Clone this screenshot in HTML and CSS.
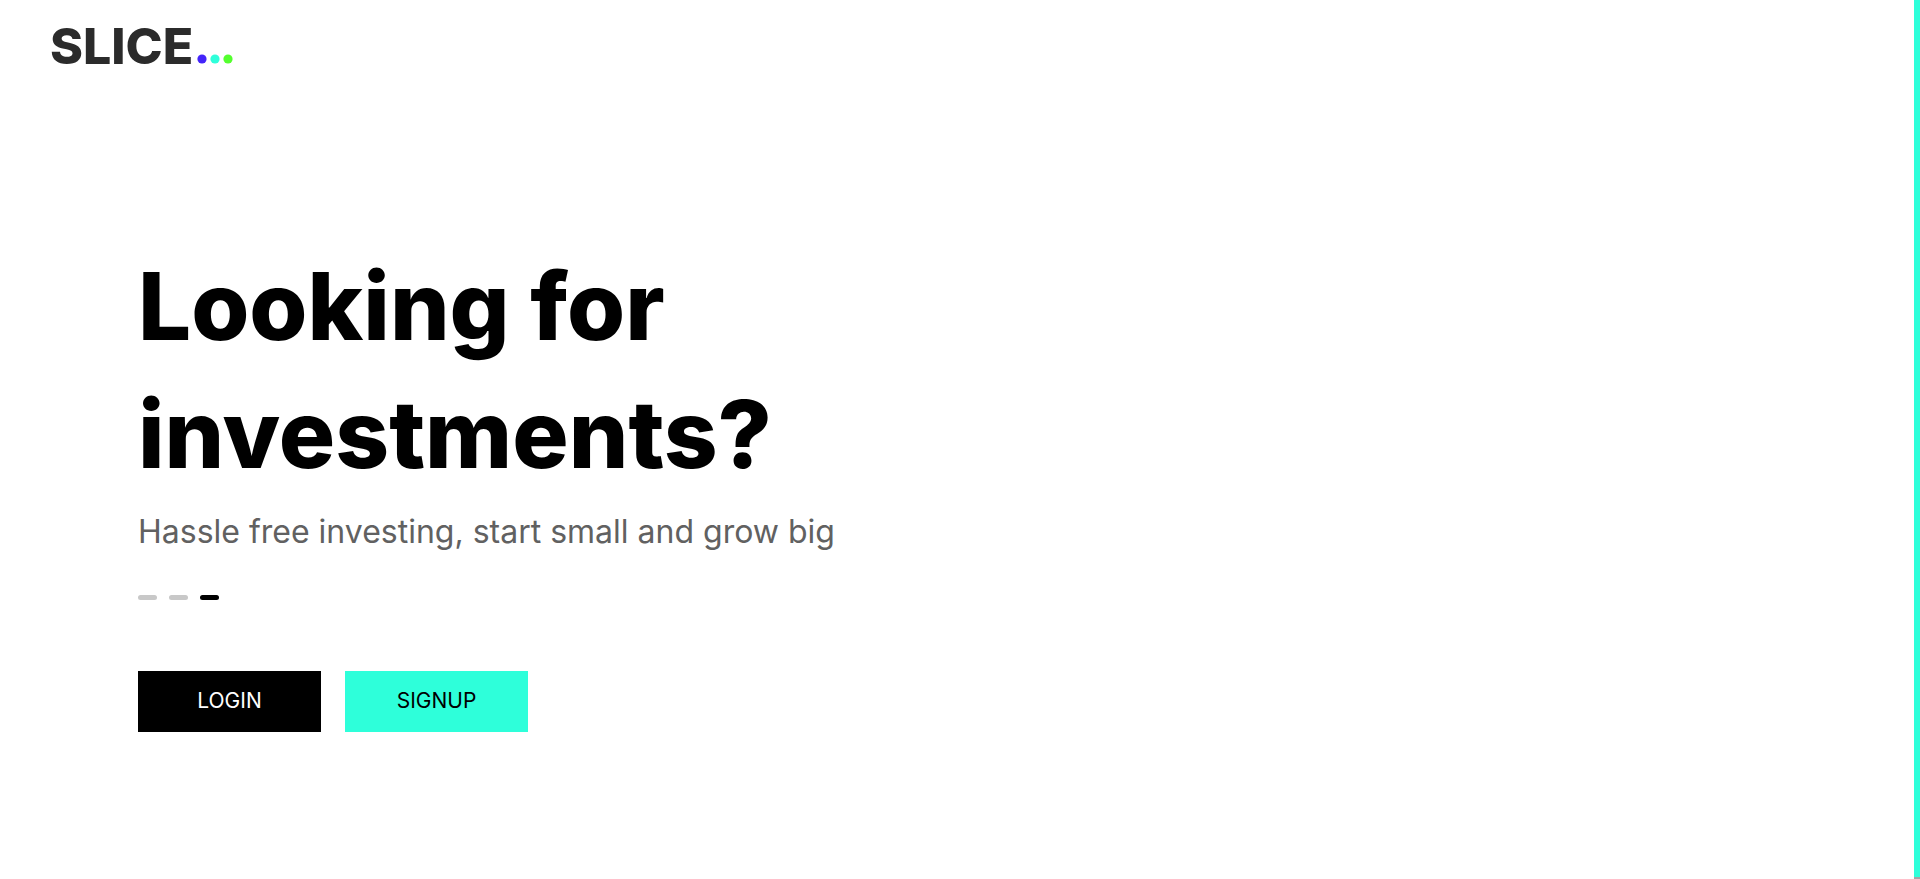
FILE: index.html
```html
<!DOCTYPE html>
<html lang="en">
<head>
<meta charset="utf-8">
<meta name="viewport" content="width=device-width, initial-scale=1">
<title>Slice</title>
<link rel="stylesheet" href="styles.css">
</head>
<body>
<div class="page">
  <div class="content">
    <header class="header">
      <div class="logo">
        <span class="logo-word">SLICE</span>
        <svg class="logo-dots" viewBox="0 0 36 10" aria-hidden="true">
          <circle cx="5" cy="5" r="4.6" fill="#4324fa"/>
          <circle cx="18" cy="5" r="4.6" fill="#2effda"/>
          <circle cx="31" cy="5" r="4.6" fill="#54ff2e"/>
        </svg>
      </div>
    </header>
    <main class="hero">
      <h1 class="title">Looking for<br>investments?</h1>
      <p class="subtitle">Hassle free investing, start small and grow big</p>
      <div class="pager">
        <span class="pill"></span>
        <span class="pill"></span>
        <span class="pill pill-active"></span>
      </div>
      <div class="actions">
        <button class="button button-login" type="button">LOGIN</button>
        <button class="button button-signup" type="button">SIGNUP</button>
      </div>
    </main>
  </div>
  <aside class="stripe"></aside>
</div>
</body>
</html>
```
FILE: styles.css
```css
* {
  box-sizing: border-box;
}

body {
  margin: 0;
  background: #fff;
  color: #000;
  font-family: Inter, "Liberation Sans", sans-serif;
}

.page {
  display: flex;
  min-height: 100vh;
}

.content {
  flex: 1;
}

.stripe {
  width: 6px;
  background: #2effda;
  border-bottom: 2px solid #a6a6a6;
}

.header {
  padding: 16px 50px;
}

.logo {
  display: flex;
  align-items: flex-end;
  gap: 4px;
}

.logo-word {
  color: #2b2b2b;
  font-size: 50px;
  font-weight: 800;
  line-height: 60px;
}

.logo-dots {
  width: 36px;
  height: 10px;
  margin-bottom: 12px;
}

.hero {
  padding: 150px 138px 0;
}

.title {
  margin: 0;
  font-size: 94px;
  font-weight: 800;
  line-height: 128px;
}

.subtitle {
  margin: 10px 0 0;
  color: #616161;
  font-size: 32px;
  line-height: 48px;
}

.pager {
  display: flex;
  gap: 12px;
  margin-top: 39px;
}

.pill {
  width: 19px;
  height: 5px;
  border-radius: 3px;
  background: #c8c8c8;
}

.pill-active {
  background: #000;
}

.actions {
  display: flex;
  gap: 24px;
  margin-top: 71px;
}

.button {
  width: 183px;
  height: 61px;
  padding: 0 0 3px;
  border: 0;
  font-family: inherit;
  font-size: 21px;
  cursor: pointer;
}

.button-login {
  background: #000;
  color: #fff;
}

.button-signup {
  background: #2effda;
  color: #000;
}
```
